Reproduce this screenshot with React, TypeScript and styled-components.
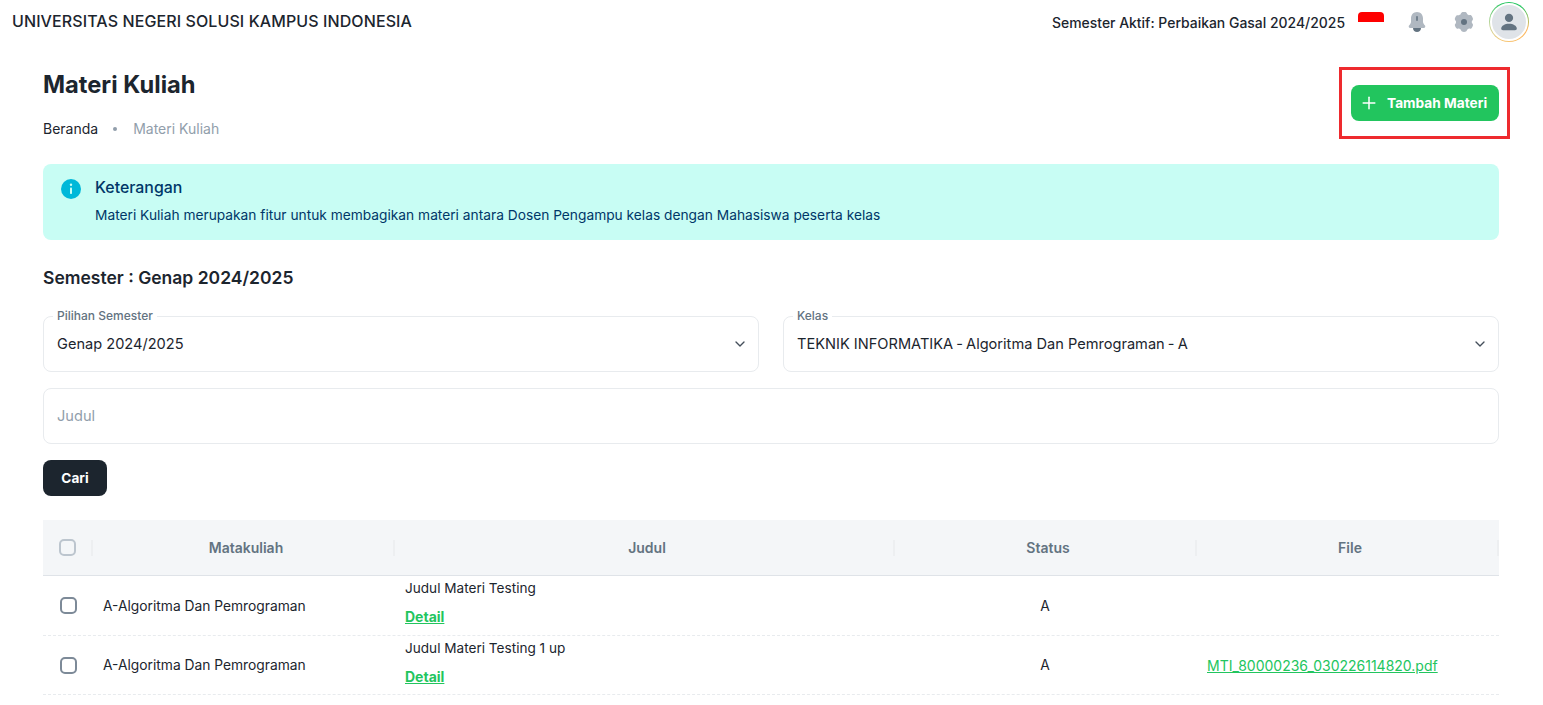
import React from "react";
import styled, { createGlobalStyle } from "styled-components";
import { Plus, ChevronDown } from "lucide-react";

const GlobalStyle = createGlobalStyle`
  html, body {
    margin: 0;
    padding: 0;
    background: #fff;
    overflow: hidden;
    font-family: "Inter", "Liberation Sans", sans-serif;
    color: #1c252e;
  }
  * {
    box-sizing: border-box;
  }
`;

const Topbar = styled.header`
  height: 44px;
  display: flex;
  align-items: center;
  padding: 0 14px 0 12px;
`;

const Brand = styled.div`
  flex: 1;
  padding-bottom: 2px;
  font-size: 16px;
  letter-spacing: 0.1px;
  font-weight: 500;
  color: #1c252e;
  white-space: nowrap;
`;

const ActiveSemester = styled.div`
  font-size: 13.95px;
  font-weight: 500;
  margin-right: 13px;
  white-space: nowrap;
`;

const Flag = styled.div`
  width: 26px;
  height: 10px;
  margin: 0 21px 10px 0;
  background: #fe0000;
  border-radius: 4px 4px 0 0;
`;

const IconSlot = styled.div<{ $gap: number }>`
  width: 24px;
  height: 24px;
  margin-right: ${(p) => p.$gap}px;
  display: flex;
  align-items: center;
  justify-content: center;
`;

const AvatarRing = styled.div`
  width: 40px;
  height: 40px;
  padding: 1px;
  border-radius: 50%;
  background: conic-gradient(from 110deg, #fdb45a 0deg, #f6c878 90deg, #c9d6a0 150deg, #22c55e 230deg, #22c55e 290deg, #fdb45a 360deg);
`;

const AvatarInner = styled.div`
  width: 100%;
  height: 100%;
  border-radius: 50%;
  border: 2px solid #fff;
  background: #dfe3e8;
  display: flex;
  align-items: center;
  justify-content: center;
`;

const Main = styled.main`
  position: relative;
  padding: 0 44px 0 43px;
`;

const PageHeader = styled.div`
  display: flex;
  justify-content: space-between;
  align-items: flex-start;
  height: 120px;
`;

const PageTitle = styled.h1`
  margin: 25px 0 0;
  font-size: 23.7px;
  line-height: 32px;
  font-weight: 700;
`;

const Breadcrumb = styled.div`
  margin-top: 17px;
  display: flex;
  align-items: center;
  font-size: 14px;
  line-height: 22px;
`;

const Dot = styled.span`
  width: 4px;
  height: 4px;
  border-radius: 50%;
  margin: 0 16px 0 15px;
  background: #919eab;
`;

const CrumbMuted = styled.span`
  color: #919eab;
`;

const AddButton = styled.button`
  margin-top: 41px;
  width: 148px;
  height: 36px;
  display: flex;
  align-items: center;
  padding: 0 0 0 8px;
  gap: 8px;
  border: 0;
  border-radius: 8px;
  background: #22c55e;
  color: #fff;
  font: 700 13.7px "Inter", "Liberation Sans", sans-serif;
  white-space: nowrap;
`;

const Annotation = styled.div`
  position: absolute;
  left: 1339px;
  top: 23px;
  width: 171px;
  height: 72px;
  border: 3px solid #ee2a2e;
  pointer-events: none;
`;

const Alert = styled.div`
  height: 76px;
  border-radius: 8px;
  background: #c8fdf4;
  display: flex;
  padding: 14px 18px;
  gap: 14px;
  color: #003768;
`;

const AlertIcon = styled.div`
  flex: none;
  margin-top: 1px;
  width: 20px;
  height: 20px;
`;

const AlertTitle = styled.div`
  font-size: 15.9px;
  line-height: 20px;
  font-weight: 500;
`;

const AlertText = styled.div`
  margin-top: 7px;
  font-size: 13.75px;
  line-height: 20px;
`;

const SectionTitle = styled.h2`
  margin: 26px 0 0;
  font-size: 17.5px;
  line-height: 24px;
  font-weight: 600;
`;

const FieldRow = styled.div`
  margin-top: 26px;
  display: grid;
  grid-template-columns: 1fr 1fr;
  gap: 24px;
`;

const Field = styled.div`
  position: relative;
  height: 56px;
  padding: 0 10px 1px 13px;
  border: 1px solid #e8ebee;
  border-radius: 8px;
  display: flex;
  align-items: center;
  justify-content: space-between;
  font-size: 14.6px;
  white-space: nowrap;
`;

const FieldLabel = styled.span`
  position: absolute;
  top: -8px;
  left: 9px;
  padding: 0 4px;
  background: #fff;
  font-size: 12px;
  line-height: 14px;
  font-weight: 500;
  color: #637381;
`;

const Dash = styled.span`
  margin: 0 -1px;
`;

const SearchField = styled(Field)`
  margin-top: 16px;
  color: #919eab;
`;

const SearchButton = styled.button`
  display: block;
  margin-top: 16px;
  width: 64px;
  height: 36px;
  border: 0;
  border-radius: 8px;
  background: #1c252e;
  color: #fff;
  font: 700 13.6px "Inter", "Liberation Sans", sans-serif;
`;

const Table = styled.div`
  margin-top: 24px;
`;

const columns = "50px 302px 500px 302px 302px";

const HeadRow = styled.div`
  height: 56px;
  display: grid;
  grid-template-columns: ${columns};
  align-items: center;
  background: #f4f6f8;
  border-bottom: 1px solid #dfe3e8;
`;

const HeadCell = styled.div`
  height: 16px;
  padding-left: 6px;
  display: flex;
  align-items: center;
  justify-content: center;
  border-right: 2px solid #edeff1;
  font-size: 14px;
  font-weight: 600;
  color: #637381;
`;

const Row = styled.div`
  height: 59px;
  display: grid;
  grid-template-columns: ${columns};
  align-items: center;
  border-bottom: 1px dashed #e8ebee;
  font-size: 13.8px;
  &:first-child {
    height: 60px;
  }
`;

const CheckCell = styled.div`
  display: flex;
  justify-content: center;
  padding-left: 1px;
`;

const HeadCheckCell = styled(CheckCell)`
  height: 16px;
  align-items: center;
  border-right: 2px solid #edeff1;
`;

const CheckBox = styled.span<{ $muted?: boolean }>`
  flex: none;
  width: 17px;
  height: 17px;
  border: 2px solid ${(p) => (p.$muted ? "#bcc5ce" : "#7d8a98")};
  border-radius: 5px;
`;

const TextCell = styled.div`
  padding-left: 10px;
  white-space: nowrap;
`;

const TitleCell = styled.div`
  padding: 0 0 6px 10px;
  display: flex;
  flex-direction: column;
  gap: 9px;
  font-size: 13.6px;
  line-height: 20px;
`;

const DetailLink = styled.a`
  font-size: 14px;
  line-height: 20px;
  font-weight: 700;
  color: #22c55e;
  text-decoration: underline;
`;

const StatusCell = styled.div`
  text-align: center;
  padding-right: 2px;
`;

const FileLink = styled.a`
  padding-left: 10px;
  font-size: 14px;
  color: #22c55e;
  text-decoration: underline;
  white-space: nowrap;
`;

const BellIcon = () => (
  <svg width="20" height="22" viewBox="0 0 20 22">
    <path d="M10 1c-3.600 0-6 2.800-6 6.400v3.300c0 1.500-1 2.700-2 3.900-.7 1-.2 2.400 1.200 2.400h13.600c1.400 0 1.900-1.400 1.200-2.400-1-1.200-2-2.400-2-3.900V7.400C16 3.800 13.600 1 10 1z" fill="#b0b8c1" />
    <path d="M6 17h8c0 2.400-1.800 4-4 4s-4-1.600-4-4z" fill="#637381" />
    <rect x="9.200" y="5" width="1.600" height="5" rx=".8" fill="#637381" />
  </svg>
);

const GearIcon = () => (
  <svg width="20" height="20" viewBox="0 0 20 20">
    <path d="M8 .6c1.200-.5 2.800-.5 4 0 .8.4 1 1.300 1.300 2 .6.2 1.100.5 1.600.9.8-.1 1.700-.4 2.400.2.900.9 1.500 2.300 1.700 3.500 0 .9-.7 1.500-1.200 2.100a6 6 0 0 1 0 1.800c.5.600 1.200 1.200 1.200 2.100-.2 1.200-.8 2.600-1.700 3.500-.7.600-1.600.3-2.400.2-.5.400-1 .7-1.600.9-.3.7-.5 1.600-1.300 2-1.200.5-2.800.5-4 0-.8-.4-1-1.300-1.300-2-.6-.2-1.100-.5-1.600-.9-.8.100-1.700.4-2.400-.2C1.600 15.900 1 14.500.8 13.300c0-.9.7-1.500 1.200-2.100a6 6 0 0 1 0-1.800C1.500 8.800.8 8.200.8 7.300 1 6.100 1.600 4.700 2.500 3.800c.7-.6 1.600-.3 2.400-.2.5-.4 1-.7 1.600-.9C6.800 1.900 7.200 1 8 .6z" fill="#b0b8c1" transform="translate(0 -.3)" />
    <circle cx="10" cy="10" r="3" fill="#637381" />
  </svg>
);

const PersonIcon = () => (
  <svg width="22" height="22" viewBox="0 0 24 24" fill="#637381">
    <circle cx="12" cy="7.500" r="4.500" />
    <path d="M12 14c-4.600 0-8.500 2.300-8.500 5.200 0 1 .7 1.800 2 1.800h13c1.300 0 2-.8 2-1.800C20.500 16.300 16.600 14 12 14z" />
  </svg>
);

const InfoIcon = () => (
  <svg width="20" height="20" viewBox="0 0 20 20">
    <circle cx="10" cy="10" r="10" fill="#00b8d9" />
    <circle cx="10" cy="5.800" r="1.200" fill="#c8fdf4" />
    <rect x="9" y="8.500" width="2" height="6.500" rx=".8" fill="#c8fdf4" />
  </svg>
);

const rows = [
  { title: "Judul Materi Testing", file: "" },
  { title: "Judul Materi Testing 1 up", file: "MTI_80000236_030226114820.pdf" },
];

const App = () => {
  return (
    <>
      <GlobalStyle />
      <Topbar>
        <Brand>UNIVERSITAS NEGERI SOLUSI KAMPUS INDONESIA</Brand>
        <ActiveSemester>Semester Aktif: Perbaikan Gasal 2024/2025</ActiveSemester>
        <Flag />
        <IconSlot $gap={23}>
          <BellIcon />
        </IconSlot>
        <IconSlot $gap={13}>
          <GearIcon />
        </IconSlot>
        <AvatarRing>
          <AvatarInner>
            <PersonIcon />
          </AvatarInner>
        </AvatarRing>
      </Topbar>
      <Main>
        <PageHeader>
          <div>
            <PageTitle>Materi Kuliah</PageTitle>
            <Breadcrumb>
              Beranda
              <Dot />
              <CrumbMuted>Materi Kuliah</CrumbMuted>
            </Breadcrumb>
          </div>
          <AddButton>
            <Plus size={20} strokeWidth={1.8} />
            Tambah Materi
          </AddButton>
        </PageHeader>
        <Annotation />
        <Alert>
          <AlertIcon>
            <InfoIcon />
          </AlertIcon>
          <div>
            <AlertTitle>Keterangan</AlertTitle>
            <AlertText>
              Materi Kuliah merupakan fitur untuk membagikan materi antara Dosen Pengampu kelas dengan Mahasiswa peserta kelas
            </AlertText>
          </div>
        </Alert>
        <SectionTitle>Semester : Genap 2024/2025</SectionTitle>
        <FieldRow>
          <Field>
            <FieldLabel>Pilihan Semester</FieldLabel>
            Genap 2024/2025
            <ChevronDown size={16} color="#454f5b" />
          </Field>
          <Field>
            <FieldLabel>Kelas</FieldLabel>
            <span>
              TEKNIK INFORMATIKA<Dash> - </Dash>Algoritma Dan Pemrograman<Dash> - </Dash>A
            </span>
            <ChevronDown size={16} color="#454f5b" />
          </Field>
        </FieldRow>
        <SearchField>Judul</SearchField>
        <SearchButton>Cari</SearchButton>
        <Table>
          <HeadRow>
            <HeadCheckCell>
              <CheckBox $muted />
            </HeadCheckCell>
            <HeadCell>Matakuliah</HeadCell>
            <HeadCell>Judul</HeadCell>
            <HeadCell>Status</HeadCell>
            <HeadCell>File</HeadCell>
          </HeadRow>
          <div>
            {rows.map((row) => (
              <Row key={row.title}>
                <CheckCell>
                  <CheckBox />
                </CheckCell>
                <TextCell>A-Algoritma Dan Pemrograman</TextCell>
                <TitleCell>
                  {row.title}
                  <div>
                    <DetailLink href="#">Detail</DetailLink>
                  </div>
                </TitleCell>
                <StatusCell>A</StatusCell>
                <div>{row.file && <FileLink href="#">{row.file}</FileLink>}</div>
              </Row>
            ))}
          </div>
        </Table>
      </Main>
    </>
  );
};

export default App;
